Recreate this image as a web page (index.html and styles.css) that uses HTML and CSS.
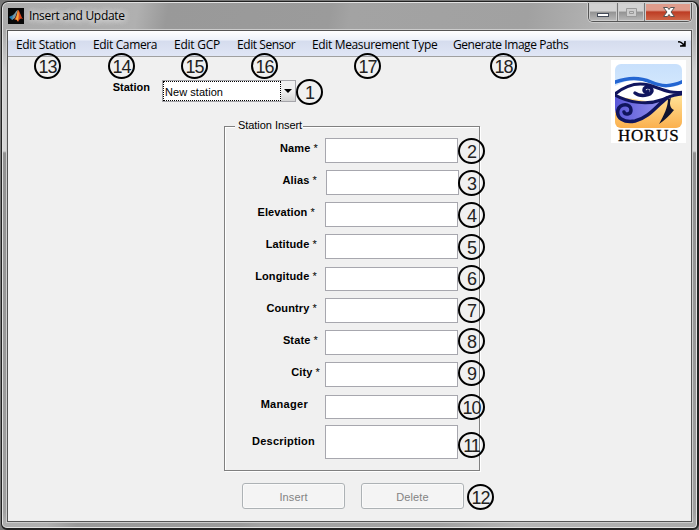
FILE: index.html
```
<!DOCTYPE html>
<html lang="en">
<head>
<meta charset="utf-8">
<title>Insert and Update</title>
<link rel="stylesheet" href="styles.css">
</head>
<body>
<div class="window">
  <header class="titlebar">
    <svg class="app-icon" viewBox="0 0 16 16"><rect width="16" height="16" fill="#080808"/><path d="M1 9l4-2 2 2-3 3z" fill="#237ab0"/><path d="M5 7c2-1 3-5 5-5L7 10 4 12z" fill="#7795a0"/><path d="M10 2c2 1 3 7 5 9-2-1-3-1-5 3-1-2-2-3-4-2 2-2 3-7 4-10z" fill="#d6451d"/><path d="M10 2c1 3 1 6 0 11-1-1-2-2-3-1 2-3 2-6 3-10z" fill="#f7a63c"/></svg>
    <h1 class="title">Insert and Update</h1>
    <div class="controls">
      <span class="control minimize"><svg width="28" height="18" viewBox="0 0 28 18"><rect x="8.500" y="10.500" width="11" height="3" fill="#fff" stroke="#444b58"/></svg></span>
      <span class="control maximize"><svg width="26" height="18" viewBox="0 0 26 18"><path d="M8.500 5.500h10v8h-10zM11.500 8.500h4v2h-4z" fill="#ccc" stroke="#999"/></svg></span>
      <span class="control close"><svg width="46" height="18" viewBox="0 0 46 18"><path d="M18.500 4.500h4l1.500 2 1.500-2h4l-3.500 4.500 3.500 4.500h-4l-1.500-2-1.500 2h-4l3.500-4.500z" fill="#fff" stroke="#555"/></svg></span>
    </div>
  </header>
  <main class="client">
    <nav class="menubar">
      <span class="item station">Edit Station<b class="badge b13">13</b></span>
      <span class="item camera">Edit Camera<b class="badge b14">14</b></span>
      <span class="item gcp">Edit GCP<b class="badge b15">15</b></span>
      <span class="item sensor">Edit Sensor<b class="badge b16">16</b></span>
      <span class="item measure">Edit Measurement Type<b class="badge b17">17</b></span>
      <span class="item paths">Generate Image Paths<b class="badge b18">18</b></span>
      <svg class="dock" width="8" height="6" viewBox="0 0 8 6"><path d="M0 1c2-1 3 0 5 2M7 0v5H2" fill="none" stroke="#000" stroke-width="1.500"/><path d="M7 1v4H3z"/></svg>
    </nav>
    <div class="content">
      <div class="top">
        <span class="station-label">Station</span>
        <div class="select"><span class="value">New station</span><span class="arrow"><svg width="8" height="4"><path d="M0 0h8L4 4z"/></svg></span><b class="badge b1">1</b></div>
        <div class="logo">
          <svg width="67" height="64" viewBox="0 0 67 64">
            <defs><linearGradient id="sky" x2="0" y2="1"><stop stop-color="#c8e0fc"/><stop offset="1" stop-color="#e4f4ff"/></linearGradient><linearGradient id="sand" x2="0" y2="1"><stop stop-color="#ffe49a"/><stop offset="1" stop-color="#fbb04e"/></linearGradient><linearGradient id="violet"><stop stop-color="#5a58d8"/><stop offset="1" stop-color="#9290ed"/></linearGradient><clipPath id="tile"><rect width="67" height="64" rx="6"/></clipPath></defs>
            <g clip-path="url(#tile)" stroke-linecap="round"><path fill="url(#sky)" d="M0 0h67v64H0z"/><path d="M0 30h67v34H0z" fill="url(#sand)"/>
            <path d="M0 22c12-7 24-8 37-3s18 6 30 1v10c-8 0-16 8-24 9L0 32z" fill="#fff"/>
            <path d="M0 31c10 7 26 10 47 6-6 8-16 15-26 19-10 2-19 0-21-10z" fill="url(#violet)"/>
            <path d="M-2 19c12-5 24-7 38-1 11 5 20 5 33-1" fill="none" stroke="#2466d2" stroke-width="3.500"/>
            <path d="M0 30C11 21 22 18 34 21c13 4 20 9 35 7" fill="none" stroke="#10155e" stroke-width="3"/>
            <path d="M0 31c14 8 33 10 46 5 8-3 13-6 23-6" fill="none" stroke="#10155e" stroke-width="3"/>
            <path d="M52 34C42 41 35 53 20 57 9 59 1 54 3 46c2-7 13-7 13 0 0 5-6 5-7 2" fill="none" stroke="#10155e" stroke-width="3.500"/>
            <path d="M20 29c5 4 16 3 17-2 0-5-8-5-8-1 0 2 3 3 4 1" fill="none" stroke="#10155e" stroke-width="3.500"/>
            <path d="M53 35c0 8-4 16-9 25 6-4 10-8 15-14-4-2-5-6-3-12z" fill="#11142f"/></g>
          </svg>
          <span class="logo-name">HORUS</span>
        </div>
      </div>
      <section class="panel">
        <h2 class="legend">Station Insert</h2>
        <div class="row name"><label>Name <i>*</i></label><span class="input"></span><b class="badge">2</b></div>
        <div class="row alias"><label>Alias <i>*</i></label><span class="input"></span><b class="badge">3</b></div>
        <div class="row elevation"><label>Elevation <i>*</i></label><span class="input"></span><b class="badge">4</b></div>
        <div class="row latitude"><label>Latitude <i>*</i></label><span class="input"></span><b class="badge">5</b></div>
        <div class="row longitude"><label>Longitude <i>*</i></label><span class="input"></span><b class="badge">6</b></div>
        <div class="row country"><label>Country <i>*</i></label><span class="input"></span><b class="badge">7</b></div>
        <div class="row state"><label>State <i>*</i></label><span class="input"></span><b class="badge">8</b></div>
        <div class="row city"><label>City <i>*</i></label><span class="input"></span><b class="badge">9</b></div>
        <div class="row manager"><label>Manager</label><span class="input"></span><b class="badge">10</b></div>
        <div class="row description"><label>Description</label><span class="input"></span><b class="badge">11</b></div>
      </section>
      <div class="actions"><span class="button">Insert</span><span class="button">Delete<b class="badge b12">12</b></span></div>
    </div>
  </main>
</div>
</body>
</html>
```
FILE: styles.css
```
* { box-sizing: border-box; }
body { margin: 0; background: #777; font-family: "Liberation Sans", Arial, sans-serif; font-size: 11px; color: #000; overflow: hidden; }
.window { width: 698px; height: 529px; margin: 1px 0 0 1px; border: 1px solid #222; border-right-width: 2px; border-bottom-width: 2px; border-radius: 7px 7px 6px 6px; background: linear-gradient(transparent 30px, #d0d0d0 70px, #d6d6d6 149px, #929292 151px, #a0a0a0 510px, transparent 521px), linear-gradient(100deg, #ababab 0, #b0b0b0 135px, #999 165px, #9b9b9b 325px, #a3a3a3 345px, #a1a1a1 520px, #b5b5b5 600px, #aaa 100%); box-shadow: inset 0 0 0 1px #e2e2e2; padding: 0 5px; }
.titlebar { height: 28px; display: flex; align-items: flex-start; padding-left: 1px; }
.app-icon { width: 16px; height: 16px; margin-top: 6px; }
.title { margin: 5px 0 0 5px; font: 12px/17px "Open Sans", sans-serif; letter-spacing: -.32px; text-shadow: 0 0 7px #fff, 0 0 7px #eee; }
.controls { display: flex; margin: 1px 0 0 auto; height: 19px; border: 1px solid #555; border-top: 0; border-radius: 0 0 5px 5px; overflow: hidden; box-shadow: 0 0 0 1px #ccc; }
.control { height: 18px; border-right: 1px solid #777; background: linear-gradient(#d2d2d2 0 45%, #929292 50%, #bbb); box-shadow: inset 0 0 0 1px #ccc; }
.control svg { display: block; }
.close { border: 0; background: linear-gradient(#df9c8c 0 40%, #bd3c24 50%, #d16a4b); }
.client { width: 685px; height: 492px; border: 1px solid #555; box-shadow: 0 0 0 1px #ccc; background: #f0f0f0; }
.menubar { height: 26px; display: flex; border-bottom: 1px solid #a0a0a0; background: linear-gradient(#fff 0, #edf1fa 9px, #d5dcee 10px, #e0e6f5 100%); font: 12px/27px "Open Sans", sans-serif; padding-left: 8px; position: relative; }
.item { position: relative; white-space: nowrap; flex: none; height: 26px; }
.station { width: 77px; letter-spacing: -.34px; }
.camera { width: 81px; letter-spacing: -.36px; }
.gcp { width: 63px; letter-spacing: -.25px; }
.sensor { width: 75px; letter-spacing: -.43px; }
.measure { width: 141px; letter-spacing: -.35px; }
.paths { width: 120px; letter-spacing: -.44px; }
.dock { margin: 10px 5px 0 auto; }
.badge { position: absolute; width: 27px; height: 26px; border: 2px solid #000; border-radius: 50%; font: 18px/24px "Liberation Sans", Arial, sans-serif; text-align: center; letter-spacing: -1px; color: #222; z-index: 2; }
.b13 { left: 18px; top: 22px; }
.b14 { left: 15px; top: 22px; }
.b15 { left: 7px; top: 22px; }
.b16 { left: 14px; top: 22px; }
.b17 { left: 42px; top: 22px; }
.b18 { left: 37px; top: 22px; }
.top { height: 69px; display: flex; }
.station-label { width: 154px; padding: 23px 12px 0 0; text-align: right; font-weight: bold; line-height: 14px; }
.select { position: relative; display: flex; width: 134px; height: 22px; margin-top: 23px; border: 1px solid #a5a5aa; background: #fff; }
.value { width: 118px; outline: 1px dotted #000; outline-offset: -1px; padding-left: 2px; line-height: 23px; letter-spacing: .05px; }
.arrow { flex: 1; background: linear-gradient(#f1f1f1 50%, #d4d4d4); display: flex; align-items: center; justify-content: center; }
.b1 { left: 133px; top: -2px; }
.logo { width: 75px; height: 83px; margin: 3px 5px 0 auto; padding: 4px 0 0 4px; background: #fff; }
.logo svg { display: block; }
.logo-name { display: block; font: 17px/15px "Liberation Serif", serif; padding-left: 3px; letter-spacing: .75px; -webkit-text-stroke: .3px #111; }
.panel { position: relative; width: 256px; height: 345px; margin-left: 216px; border: 1px solid #808080; box-shadow: inset 1px 1px #fff, 1px 1px #fff; padding-top: 11px; }
.legend { position: absolute; top: -9px; left: 10px; margin: 0; padding: 0 1px 0 3px; background: #f0f0f0; font: 11px/14px "Liberation Sans", sans-serif; letter-spacing: -.05px; white-space: nowrap; }
.row { position: relative; display: flex; height: 32px; }
.row label { width: 100px; padding: 3px 7px 0 0; text-align: right; font-weight: bold; line-height: 14px; letter-spacing: .12px; white-space: nowrap; }
.row i { font-style: normal; font-weight: normal; }
.input { width: 133px; height: 25px; flex: none; background: #fff; border: 1px solid #a7a7ae; }
.row .badge { left: 233px; top: 0; }
.row.alias .input { margin-left: 1px; }
.row.alias label, .row.latitude label, .row.longitude label, .row.country label { padding-right: 8px; }
.row.elevation label { padding-right: 10px; }
.row.longitude .input { margin-top: 1px; height: 24px; }
.row.longitude .badge, .row.country .badge { top: -1px; }
.row.state .badge, .row.city .badge { top: -2px; }
.row.city label { padding-right: 5px; }
.row.manager label { padding-right: 17px; letter-spacing: .3px; }
.row.manager .input { margin-top: 1px; height: 24px; }
.row.manager .badge { top: 0; }
.row.description { height: 36px; margin-top: -1px; }
.row.description label { padding: 9px 10px 0 0; letter-spacing: .22px; }
.row.description .input { height: 34px; }
.row.description .badge { top: 7px; }
.actions { display: flex; gap: 16px; margin: 12px 0 0 234px; }
.button { position: relative; width: 103px; height: 26px; border: 1px solid #adb2b5; border-radius: 3px; background: #f4f4f4; box-shadow: inset 0 0 0 1px #fafafa; text-align: center; line-height: 27px; color: #838383; letter-spacing: .1px; }
.b12 { left: 105px; top: 0; }
```
